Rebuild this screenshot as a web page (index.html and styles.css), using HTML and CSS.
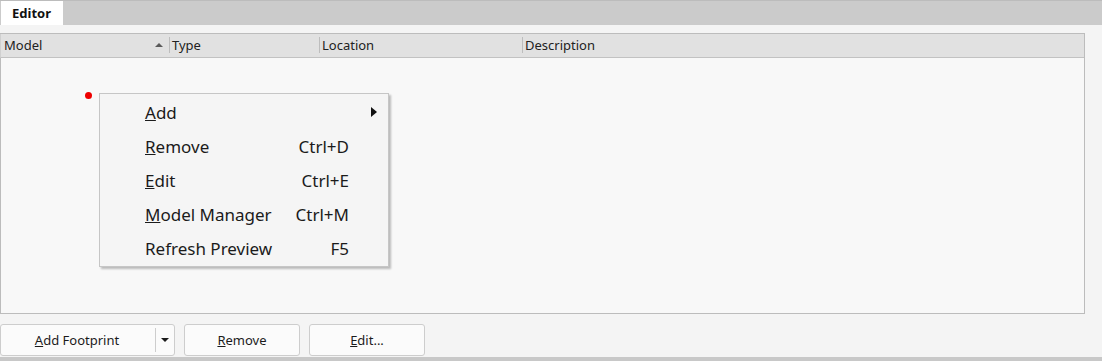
FILE: index.html
```html
<!DOCTYPE html>
<html>
<head>
<meta charset="utf-8">
<link rel="stylesheet" href="styles.css">
</head>
<body>
<div class="app">
  <div class="tabbar">
    <div class="tab">Editor</div>
  </div>
  <div class="content">
    <div class="table">
      <div class="thead">
        <div class="th th-model"><span>Model</span><span class="sort"></span></div>
        <div class="th th-type">Type</div>
        <div class="th th-loc">Location</div>
        <div class="th th-desc">Description</div>
      </div>
      <div class="tbody"></div>
    </div>
    <div class="buttons">
      <div class="btn btn-split">
        <span class="btn-main"><u>A</u>dd Footprint</span>
        <span class="btn-drop"><span class="drop-arrow"></span></span>
      </div>
      <div class="btn btn-std"><u>R</u>emove</div>
      <div class="btn btn-std"><u>E</u>dit...</div>
    </div>
  </div>
  <div class="bottombar"></div>

  <span class="dot"></span>
  <div class="menu">
    <div class="mi"><span class="ml"><u>A</u>dd</span><span class="arrow"></span></div>
    <div class="mi"><span class="ml"><u>R</u>emove</span><span class="ms">Ctrl+D</span></div>
    <div class="mi"><span class="ml"><u>E</u>dit</span><span class="ms">Ctrl+E</span></div>
    <div class="mi"><span class="ml"><u>M</u>odel Manager</span><span class="ms">Ctrl+M</span></div>
    <div class="mi"><span class="ml">Refresh Preview</span><span class="ms">F5</span></div>
  </div>
</div>
</body>
</html>
```

FILE: styles.css
```css
* { box-sizing: border-box; }
html, body { margin: 0; padding: 0; }
body {
  width: 1102px;
  height: 361px;
  overflow: hidden;
  background: #f4f4f4;
  font-family: "Noto Sans", "Open Sans", sans-serif;
  color: #1b1b1b;
}
.app {
  position: relative;
  width: 1102px;
  height: 361px;
  display: flex;
  flex-direction: column;
}
.tabbar {
  height: 25px;
  background: #cbcbcb;
  border-top: 1px solid #bcbcbc;
  display: flex;
  padding-left: 1px;
}
.tab {
  width: 62px;
  height: 24px;
  background: #ffffff;
  font-weight: bold;
  font-size: 13px;
  line-height: 24px;
  padding-left: 11px;
  color: #111;
}
.content {
  flex: 1;
  display: flex;
  flex-direction: column;
  padding: 8px 16px 0 0;
}
.table {
  width: 1085px;
  height: 281px;
  border: 1px solid #bcbcbc;
  border-left: none;
  background: #f8f8f8;
  display: flex;
  flex-direction: column;
}
.thead {
  height: 24px;
  background: #e1e1e1;
  border-bottom: 1px solid #c2c2c2;
  border-left: 1px solid #d0d0d0;
  display: flex;
  font-size: 13px;
  line-height: 23px;
}
.th {
  position: relative;
  padding-left: 3px;
  color: #222;
}
.th + .th::before {
  content: "";
  position: absolute;
  left: 0;
  top: 3px;
  bottom: 4px;
  width: 1px;
  background: #bdbdbd;
}
.th-model { width: 168px; display: flex; justify-content: space-between; padding-right: 6px; }
.th-type { width: 150px; }
.th-loc { width: 203px; }
.th-desc { flex: 1; }
.sort {
  width: 0; height: 0;
  margin-top: 9px;
  border-left: 4px solid transparent;
  border-right: 4px solid transparent;
  border-bottom: 4px solid #5a5a5a;
}
.tbody { flex: 1; border-left: 1px solid #bcbcbc; }
.buttons {
  display: flex;
  gap: 9px;
  margin-top: 10px;
}
.btn {
  height: 32px;
  border: 1px solid #cdcdcd;
  border-radius: 3px;
  background: #fbfbfb;
  font-size: 13px;
  color: #1b1b1b;
  display: flex;
  align-items: center;
  justify-content: center;
}
.btn-split { width: 175px; justify-content: flex-start; }
.btn-main { width: 154px; text-align: center; padding-right: 2px; }
.btn-drop {
  flex: 1;
  height: 24px;
  border-left: 1px solid #cdcdcd;
  display: flex;
  align-items: center;
  justify-content: center;
}
.drop-arrow {
  width: 0; height: 0;
  border-left: 4px solid transparent;
  border-right: 4px solid transparent;
  border-top: 4px solid #1b1b1b;
}
.btn-std { width: 116px; }
.bottombar {
  height: 4px;
  background: #c8c8c8;
  margin-top: 1px;
}
.dot {
  position: absolute;
  left: 85px;
  top: 92px;
  width: 7px;
  height: 7px;
  border-radius: 50%;
  background: #ee0000;
}
.menu {
  position: absolute;
  left: 99px;
  top: 93px;
  width: 290px;
  height: 174px;
  background: #f5f5f5;
  border: 1px solid #c6c6c6;
  box-shadow: 2px 2px 2px rgba(0,0,0,0.25);
  padding-top: 1px;
  font-size: 17px;
  color: #1b1b1b;
}
.mi {
  height: 34px;
  display: flex;
  align-items: center;
  padding-left: 45px;
  position: relative;
}
.ml { width: 200px; }
.ms { position: absolute; right: 39px; }
.arrow {
  position: absolute;
  left: 271px;
  top: 12px;
  width: 0; height: 0;
  border-top: 5px solid transparent;
  border-bottom: 5px solid transparent;
  border-left: 6px solid #111;
}
```
